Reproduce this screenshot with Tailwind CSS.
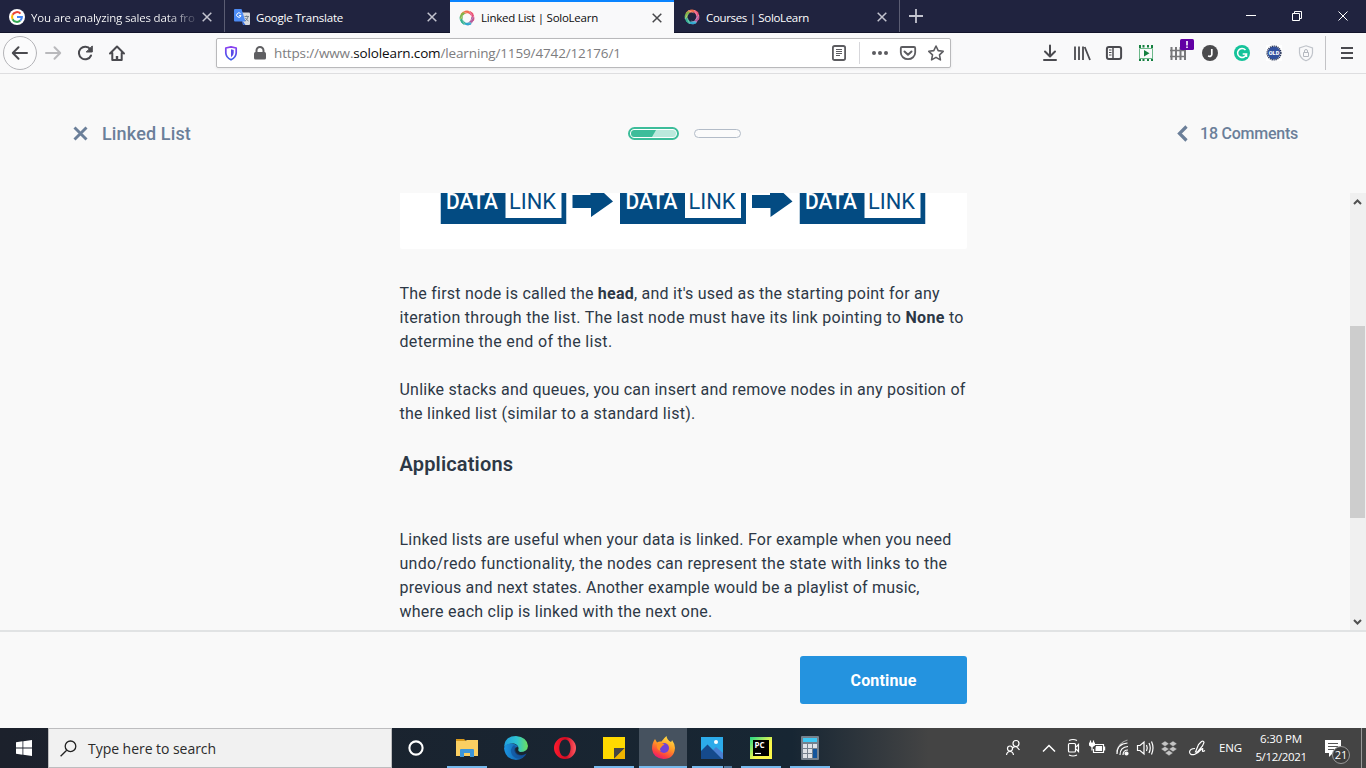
<!DOCTYPE html>
<html lang="en">
<head>
<meta charset="utf-8">
<title>Linked List | SoloLearn</title>
<script src="https://cdn.jsdelivr.net/npm/@tailwindcss/browser@4"></script>
</head>
<body class="w-[1366px] h-[768px] overflow-hidden bg-[#f9f9fa] flex flex-col font-['Open_Sans',sans-serif]">
<svg class="hidden">
  <defs>
    <symbol id="solo" viewBox="0 0 16 16"><g fill="none" stroke-width="2.6" stroke-linecap="round"><path d="M3 4.200A6 6 0 0 1 7 2" stroke="#f0883e"/><path d="M6 2.200Q10 1 13 4" stroke="#f26b4e"/><path d="M11.500 3Q15 6 13.800 10" stroke="#e8507e"/><path d="M13.500 8Q13 12.500 9 14" stroke="#b05a9c"/><path d="M11 13.500Q6 15 3.500 12" stroke="#2fa8cf"/><path d="M5 13.200Q1 10 2.200 6.500" stroke="#35b08e"/><path d="M2.200 8Q2 5 4.500 3.500" stroke="#82b54b"/></g><g stroke="#ffffff" stroke-opacity=".55" stroke-width=".6" fill="none"><path d="M4 1.500Q8 3 9.500 4M10 1Q13 4 12.500 7M15 6Q13 9 11.500 11M13 13Q9 13 7 12M6 15Q4 12 3.500 9M1 10Q3 6 4.500 5"/></g></symbol>
    <symbol id="x" viewBox="0 0 10 10"><path d="M.7.7 9.300 9.300M9.300.7.7 9.300" fill="none" stroke="currentColor" stroke-width="1.500"/></symbol>
  </defs>
</svg>

<!-- Tab strip -->
<div class="h-[33px] shrink-0 bg-[#20233f] flex text-white text-[11.5px] border-b border-[#12142b]">
  <div class="w-[225px] h-[32px] border-r border-[#5b5d73] flex items-center pl-[9px] pt-[2px]">
    <svg class="size-4 shrink-0" viewBox="0 0 16 16"><circle cx="8" cy="8" r="8" fill="#fff"/><g fill="none" stroke-width="2"><path d="M11.500 4.600A4.900 4.900 0 0 0 3.600 5.800" stroke="#ea4335"/><path d="M3.600 5.800A4.900 4.900 0 0 0 3.600 10.200" stroke="#fbbc05"/><path d="M3.600 10.200A4.900 4.900 0 0 0 11.300 11.600" stroke="#34a853"/><path d="M8 8H12.900A4.900 4.900 0 0 1 11.300 11.600" stroke="#4285f4"/></g></svg>
    <div class="ml-[6px] w-[165px] pt-px whitespace-nowrap tracking-[-0.17px] bg-linear-to-r from-white from-82% to-white/15 bg-clip-text text-transparent">You are analyzing sales data fro</div>
    <svg class="size-[10px] ml-[6px] text-[#c3c4cf]"><use href="#x"/></svg>
  </div>
  <div class="w-[225px] flex items-center pl-[9px] pt-[2px]">
    <svg class="size-4 shrink-0" viewBox="0 0 16 16"><path d="M7 3.500H15Q16 3.500 16 4.500V15Q16 16 15 16H9Z" fill="#d8d9dc"/><path d="M9 12.500 11.500 16H9.300L8 12.500Z" fill="#3367d6"/><path d="M1 0H7.500L11.500 12.500H1Q0 12.500 0 11.500V1Q0 0 1 0Z" fill="#4c8bf5"/><path d="M6.600 4.700A2.200 2.200 0 1 0 7 6.600H5" fill="none" stroke="#fff" stroke-width="1"/><path d="M10.500 7.500H15M12.700 6.500V7.500M14 8Q13 11 11 12M11.500 9Q12.500 11 14.500 12" fill="none" stroke="#6b7b86" stroke-width=".9"/></svg>
    <div class="ml-[6px] w-[165px] pt-px whitespace-nowrap tracking-[-0.22px]">Google Translate</div>
    <svg class="size-[10px] ml-[6px] text-[#c3c4cf]"><use href="#x"/></svg>
  </div>
  <div class="w-[224px] h-[33px] bg-[#f9f9fa] border-t-2 border-[#0a84ff] text-[#0c0c0d] flex items-center pl-[9px]">
    <svg class="size-4 shrink-0"><use href="#solo"/></svg>
    <div class="ml-[6px] w-[165px] pt-px whitespace-nowrap tracking-[-0.26px]">Linked List | SoloLearn</div>
    <svg class="size-[10px] ml-[6px] text-[#48484b]"><use href="#x"/></svg>
  </div>
  <div class="w-[226px] h-[32px] border-r border-[#5b5d73] flex items-center pl-[10px] pt-[2px]">
    <svg class="size-4 shrink-0"><use href="#solo"/></svg>
    <div class="ml-[6px] w-[165px] pt-px whitespace-nowrap tracking-[-0.33px]">Courses | SoloLearn</div>
    <svg class="size-[10px] ml-[6px] text-[#c3c4cf]"><use href="#x"/></svg>
  </div>
  <svg class="w-[32px] h-8 shrink-0" viewBox="0 0 32 32"><path d="M9 16H23M16 9V23" stroke="#c3c4cf" stroke-width="1.800"/></svg>
  <svg class="ml-auto w-[138px] h-8" viewBox="0 0 138 32" fill="none" stroke="#fff" stroke-width="1"><path d="M18 15.500H28M64.500 13.500H71.500V20.500H64.500ZM66.500 13V11.500H73.500V18.500H72M110.500 11.500 119.500 20.500M119.500 11.500 110.500 20.500"/></svg>
</div>

<!-- Toolbar -->
<div class="h-[41px] shrink-0 bg-[#f9f9fa] border-b border-[#dedee0] flex items-center">
  <svg class="w-[216px] h-10 shrink-0" viewBox="0 33 216 40" fill="none" stroke="#4a4a4f" stroke-width="2" stroke-linecap="round" stroke-linejoin="round">
    <circle cx="20" cy="53" r="16.500" fill="#fbfbfc" stroke="#b4b4b8" stroke-width="1"/>
    <path d="M13 53H27M18.500 47.300 12.800 53 18.500 58.700"/>
    <path d="M46 53H60M54.500 47.300 60.200 53 54.500 58.700" stroke="#b9b9bc"/>
    <path d="M90.300 49.300A6.300 6.300 0 1 0 91 55.500"/><path d="M92.300 46.300V52H86.600Z" fill="#4a4a4f" stroke-width="1"/>
    <path d="M110 53.500 117 46.500 124 53.500M112.300 53V60H121.700V53"/><path d="M117 60V56" stroke-width="2.400" stroke-linecap="butt"/>
  </svg>
  <div class="w-[735px] h-[30px] bg-white border border-[#b9b9bb] rounded-[2px] flex items-center shadow-[0_1px_3px_rgba(0,0,0,0.07)] shrink-0">
    <svg class="w-[57px] h-7 shrink-0" viewBox="217 39 57 28">
      <defs><linearGradient id="sh" x1="0" x2="0" y1="0" y2="1"><stop stop-color="#8a3ff0"/><stop offset="1" stop-color="#3a5ce8"/></linearGradient></defs>
      <path d="M231 46.800 236.200 48V53Q236 57.500 231 59.800Q226 57.500 225.800 53V48Z" fill="none" stroke="url(#sh)" stroke-width="1.700" stroke-linejoin="round"/><path d="M231 49.300V57.300Q233.700 55.500 233.700 53V50Z" fill="#5a4be8"/>
      <path d="M255.500 52H264.500Q266 52 266 53.500V58Q266 59.500 264.500 59.500H255.500Q254 59.500 254 58V53.500Q254 52 255.500 52Z" fill="#5f5f62"/><path d="M256.500 53V50.500A3.500 3.500 0 0 1 263.500 50.500V53" stroke="#5f5f62" stroke-width="2" fill="none"/>
    </svg>
    <div class="flex-1 pt-px whitespace-nowrap text-[13.5px] tracking-[-0.14px] text-[#7d7d80]">https://www.<span class="text-[#0c0c0d]">sololearn.com</span>/learning/1159/4742/12176/1</div>
    <svg class="w-[126px] h-7 shrink-0" viewBox="824 39 126 28" fill="none" stroke="#5c5c60" stroke-width="1.800" stroke-linejoin="round">
      <rect x="832.900" y="46" width="12.200" height="14" rx="1.800"/><path d="M836 49.500H842M836 51.500H842M836 53.500H842M836 55.500H840" stroke-width="1"/>
      <path d="M859.500 42V64" stroke="#d7d7db" stroke-width="1"/>
      <g fill="#5c5c60" stroke="none"><circle cx="874" cy="53" r="2"/><circle cx="880" cy="53" r="2"/><circle cx="886" cy="53" r="2"/></g>
      <path d="M902 47H914Q915.200 47 915.200 48.200V52.500A7.200 6.700 0 0 1 900.800 52.500V48.200Q900.800 47 902 47Z"/><path d="M904.500 51.500 908 54.800 911.500 51.500" stroke-width="2" stroke-linecap="round"/>
      <path d="M936 46 938.200 50.600 943.200 51.300 939.500 54.800 940.400 59.900 936 57.400 931.600 59.900 932.500 54.800 928.800 51.300 933.800 50.600Z" stroke-width="1.600"/>
    </svg>
  </div>
  <svg class="w-[415px] h-10 shrink-0" viewBox="951 33 415 40" fill="none" stroke="#4a4a4f" stroke-width="2">
    <path d="M1050 45.500V56M1045 51.500 1050 56.500 1055 51.500M1044 60H1056" stroke-linecap="round" stroke-linejoin="round"/>
    <path d="M1075 46.500V60M1079 46.500V60M1083 46.500V60M1084.700 47 1090 60" stroke-width="1.800"/>
    <rect x="1106.900" y="46.900" width="14.200" height="12.200" rx="2"/><path d="M1113 47V59" stroke-width="1.500"/><path d="M1109 50H1111.500M1109 52.500H1111.500M1109 55H1111.500" stroke-width="1"/>
    <g fill="#14803f" stroke="none"><path d="M1139 45H1141V48H1139ZM1142.500 45H1144.500V47.500H1142.500ZM1147 45H1149V47.500H1147ZM1151 45H1153V48H1151ZM1139 58.500H1141V61H1139ZM1142.500 59H1144.500V61H1142.500ZM1147 59H1149V61H1147ZM1151 58.500H1153V61H1151Z"/><path d="M1144 50V56.500L1149.500 53.250Z"/></g>
    <path d="M1139.500 48.500H1152.500V58.500H1139.500Z" stroke="#6db88a" stroke-width="1"/>
    <g stroke="#77777a"><path d="M1157.300 0" /><path d="M1172.500 47V60M1177 47V60M1181.500 47V60M1186 47V60" transform="translate(-1 0)" stroke-width="2"/><path d="M1170 50.500H1186M1170 56.500H1186" stroke-width="1.300"/></g>
    <rect x="1180" y="39" width="14" height="11" rx="1.500" fill="#6200a4" stroke="none"/><path d="M1187 41V45.500M1187 46.500V48" stroke="#fff" stroke-width="1.600"/>
    <circle cx="1210" cy="53" r="8" fill="#4b4b4d" stroke="none"/><path d="M1211.800 49V54.500Q1211.500 57 1208 56" stroke="#fff" stroke-width="1.700"/>
    <circle cx="1242" cy="53" r="8" fill="#15c39a" stroke="none"/><path d="M1245.500 50A4.500 4.500 0 1 0 1246.500 54H1242.700M1246.500 54V57" stroke="#fff" stroke-width="1.500"/>
    <rect x="1266" y="45" width="16" height="16" fill="#fff" stroke="none"/><circle cx="1274" cy="53" r="6.500" fill="#31509e" stroke="none"/><circle cx="1274" cy="53" r="6.900" stroke="#253152" stroke-width="1.400" stroke-dasharray="1.200 .8"/>
    <text x="1274" y="55.200" text-anchor="middle" textLength="10.500" lengthAdjust="spacingAndGlyphs" font-family="Roboto" font-weight="900" font-size="6" fill="#fff" stroke="none">OLD</text>
    <path d="M1306 45.800 1312.500 48V53Q1312 58.500 1306 60.800Q1300 58.500 1299.500 53V48Z" stroke="#c0c4ca" stroke-width="1.200"/><path d="M1303.500 52.500H1308.500V56.500H1303.500ZM1304.500 52V51A1.500 1.500 0 0 1 1307.500 51V52" stroke="#b4b8bf" stroke-width="1"/>
    <path d="M1325.500 36V70" stroke="#c3c3c6" stroke-width="1"/>
    <path d="M1341 48H1353M1341 53H1353M1341 58H1353"/>
  </svg>
</div>

<!-- Lesson page -->
<main class="flex-1 min-h-0 flex flex-col bg-[#f9f9f9] font-[Roboto,sans-serif] text-[#2d3846]">
  <header class="h-[119px] shrink-0 flex items-center justify-between pl-[73px] pr-[68px] text-[#6b7f99] font-medium">
    <div class="w-[338px] flex items-center text-[18px]">
      <svg class="size-[15px] mr-[14px]" viewBox="0 0 15 15"><path d="M1.500 1.500 13.500 13.500M13.500 1.500 1.500 13.500" stroke="currentColor" stroke-width="2.900"/></svg>
      <span class="tracking-[0.15px]">Linked List</span>
    </div>
    <div class="flex items-center gap-[15px]">
      <div class="w-[51px] h-[13px] rounded-full border-2 border-[#3dbd9a] bg-white p-px"><div class="h-full rounded-full overflow-hidden bg-[#bbe9dc]"><div class="h-full w-[25px] bg-[#3dbd9a] [clip-path:polygon(0_0,100%_0,84%_100%,0_100%)]"></div></div></div>
      <div class="w-[47px] h-[9px] rounded-full border border-[#b3bcc8] bg-[#fbfbfb]"></div>
    </div>
    <div class="w-[340px] flex items-center justify-end text-[16px]">
      <svg class="w-[11px] h-[17px] mr-[12px]" viewBox="0 0 11 17"><path d="M9.500 1.500 2.500 8.500 9.500 15.500" fill="none" stroke="currentColor" stroke-width="3.200"/></svg>
      <span class="tracking-[-0.24px]">18 Comments</span>
    </div>
  </header>

  <section class="h-[437px] shrink-0 flex overflow-hidden">
    <article class="w-[567px] ml-[400px] text-[16px] leading-6 whitespace-nowrap">
      <svg class="block w-[567px] h-[56px]" viewBox="400 193 567 56">
        <defs>
          <symbol id="node" viewBox="0 0 126 31"><path d="M0 0H126V31H0Z" fill="#034b82"/><path d="M65 0H121V25H65Z" fill="#fff"/><g font-family="Roboto" font-weight="500" font-size="21.500"><text x="5.500" y="16" textLength="52" lengthAdjust="spacingAndGlyphs" fill="#fff">DATA</text><text x="68.500" y="16" textLength="47" lengthAdjust="spacingAndGlyphs" fill="#034b82" font-weight="400">LINK</text></g></symbol>
          <symbol id="arrow" viewBox="0 0 41 24"><path d="M0 2H19V0H28.500L37 8.500 19 24V15.500H0Z" fill="#034b82"/></symbol>
        </defs>
        <path d="M400 193H967V247Q967 249 965 249H402Q400 249 400 247Z" fill="#fff"/>
        <use href="#node" x="440.500" y="193" width="126" height="31"/><use href="#node" x="620" y="193" width="126" height="31"/><use href="#node" x="799.500" y="193" width="126" height="31"/>
        <path id="a" d="M573 195H591V193H604.500L613.500 201.500 591.500 217V208H573Z" transform="translate(-.5 0)" fill="#034b82"/><use href="#a" x="179.500"/>
      </svg>
      <p class="mt-[33px] -ml-[0.5px]">
        <span class="tracking-[0.235px]">The first node is called the <b>head</b>, and it's used as the starting point for any</span><br>
        <span class="tracking-[0.285px]">iteration through the list. The last node must have its link pointing to <b>None</b> to</span><br>
        <span class="tracking-[0.32px]">determine the end of the list.</span>
      </p>
      <p class="mt-6 -ml-[0.5px]">
        <span class="tracking-[0.23px]">Unlike stacks and queues, you can insert and remove nodes in any position of</span><br>
        <span class="tracking-[0.26px]">the linked list (similar to a standard list).</span>
      </p>
      <h2 class="mt-[26px] text-[20px] font-semibold tracking-[0.15px] -ml-[0.5px]">Applications</h2>
      <p class="mt-[52px] -ml-[0.5px]">
        <span class="tracking-[0.22px]">Linked lists are useful when your data is linked. For example when you need</span><br>
        <span class="tracking-[0.29px]">undo/redo functionality, the nodes can represent the state with links to the</span><br>
        <span class="tracking-[0.185px]">previous and next states. Another example would be a playlist of music,</span><br>
        <span class="tracking-[0.245px]">where each clip is linked with the next one.</span>
      </p>
    </article>
    <div class="ml-auto w-4 h-full bg-[#f0f0f0] flex flex-col items-center">
      <svg class="w-4 h-[133px]" viewBox="0 0 16 133"><path d="M4 11 7.500 7.500 11 11" fill="none" stroke="#505050" stroke-width="2"/></svg>
      <div class="w-[15px] h-[192px] bg-[#cdcdcd] -ml-px"></div>
      <svg class="w-4 h-[112px]" viewBox="0 0 16 112"><path d="M4 102 7.500 105.500 11 102" fill="none" stroke="#505050" stroke-width="2"/></svg>
    </div>
  </section>

  <footer class="flex-1 border-t-2 border-[#e1e3e4] flex">
    <button class="ml-[800px] mt-[24px] w-[167px] h-[48px] pt-px rounded-[3px] bg-[#2493df] text-white text-[16px] font-bold tracking-[0.16px]">Continue</button>
  </footer>
</main>

<!-- Taskbar -->
<div class="h-10 shrink-0 flex text-white bg-linear-to-r from-[#1c212c] from-0% via-[#172633] via-58% to-[#444444] to-68%">
  <div class="w-12 flex items-center justify-center"><svg class="size-4" viewBox="0 0 16 16" fill="#fff"><path d="M0 2.300 6.500 1.300V7.500H0ZM7.300 1.200 16 0V7.500H7.300ZM0 8.500H6.500V14.700L0 13.700ZM7.300 8.500H16V16L7.300 14.800Z"/></svg></div>
  <div class="w-[344px] h-10 bg-[#f1f1f1] border border-[#bdbdbf] flex items-center text-[#2b2b2b]">
    <svg class="size-[17px] ml-[11px]" viewBox="0 0 17 17" fill="none" stroke="#222" stroke-width="1.300"><circle cx="10.500" cy="6.300" r="5.300"/><path d="M6.700 10.200.6 16.300"/></svg>
    <span class="ml-[11px] text-[14px] tracking-[-0.04px] whitespace-nowrap">Type here to search</span>
  </div>
  <div class="w-[51px] flex items-center pl-[16px]"><svg class="size-4" viewBox="0 0 16 16"><circle cx="8" cy="8" r="6.600" fill="none" stroke="#fff" stroke-width="2.100"/></svg></div>
  <div class="flex gap-px">
    <div class="w-12 flex flex-col items-center pt-[9px] justify-between"><svg class="w-[22px] h-[22px]" viewBox="0 0 22 22"><path d="M0 2H8L10 4H0Z" fill="#d99a1c"/><path d="M0 4H9L11 3H22V19H0Z" fill="#fbcf62"/><path d="M4 13Q4 12 5 12H17Q18 12 18 13V20H14V16H8V20H4Z" fill="#3d96d9"/></svg><div class="w-10 h-[2px] bg-[#76b9ed]"></div></div>
    <div class="w-12 flex justify-center pt-[8px]"><svg class="size-6" viewBox="0 0 24 24"><defs><linearGradient id="ea" x1="0" x2="1"><stop stop-color="#209fe0"/><stop offset=".55" stop-color="#2fc4d0"/><stop offset="1" stop-color="#6ee05a"/></linearGradient><linearGradient id="eb" x1="0" x2="1"><stop stop-color="#1b96e3"/><stop offset="1" stop-color="#114c95"/></linearGradient></defs><path d="M0 11Q1 0 12 0Q23 1 24 10Q23.500 16 16 16Q13.500 15 14.500 13Q15 9 10 7.500Q4 7 0 11Z" fill="url(#ea)"/><path d="M0 12Q2 7 8 7.500Q13 8 14 11Q10 11 10.500 15Q12 20 18 19.500Q20.500 19 22.500 17.500Q19 24 12 24Q1 23 0 12Z" fill="url(#eb)"/><path d="M10 9Q5 13 8 19Q11 23 16 22.500Q22 20 22.500 17.500Q18 20 14 18Q10 15 12 11Z" fill="#124b93" opacity=".6"/></svg></div>
    <div class="w-12 flex justify-center pt-[9px]"><svg class="w-[22px] h-[22px]" viewBox="0 0 22 22"><defs><linearGradient id="op" x1="0" x2="1"><stop stop-color="#ff1b2d"/><stop offset=".55" stop-color="#d00a22"/><stop offset="1" stop-color="#ff5a62"/></linearGradient></defs><path d="M11 0A11 11 0 1 1 11 22A11 11 0 1 1 11 0ZM11 2.500C3.500 2.500 3.500 19.500 11 19.500C18.500 19.500 18.500 2.500 11 2.500Z" fill-rule="evenodd" fill="url(#op)"/></svg></div>
    <div class="w-12 flex flex-col items-center pt-[9px] justify-between"><svg class="w-[22px] h-[22px]" viewBox="0 0 22 22"><path d="M0 0H22V22H0Z" fill="#ffd900"/><path d="M11 11H22L11 22Z" fill="#454545"/><path d="M22 11V22H11Z" fill="#f0b400"/></svg><div class="w-10 h-[2px] bg-[#76b9ed]"></div></div>
    <div class="w-12 flex flex-col items-center pt-[8px] justify-between bg-[#46525f]"><svg class="w-[23px] h-[23px]" viewBox="0 0 23 23"><defs><linearGradient id="ff" x1=".8" y1="0" x2=".3" y2="1"><stop stop-color="#ffe84a"/><stop offset=".45" stop-color="#ff9a25"/><stop offset=".8" stop-color="#fb4140"/><stop offset="1" stop-color="#e8147a"/></linearGradient></defs><path d="M3 3 5 6.500Q7 5 9.500 5.500Q12 2 14.500 0Q15 4 19 6Q20 5 20 4Q23 8 23 12Q22 23 11.500 23Q1 22 0 13Q0 7 3 3Z" fill="url(#ff)"/><circle cx="12" cy="12" r="5" fill="#7143d6"/><path d="M5 8Q9 6 12.500 8.500Q10 9.500 9 11.500Q7 13 9 15Q4 14 5 8Z" fill="#ff9122"/></svg><div class="w-12 h-[2px] bg-[#76b9ed]"></div></div>
    <div class="w-12 flex flex-col items-center pt-[9px] justify-between"><svg class="w-[22px] h-[22px]" viewBox="0 0 22 22"><path d="M0 0H22V22H0Z" fill="#2cabea"/><path d="M11 14 15 10 22 16V22H11Z" fill="#4a7fd0"/><path d="M0 14 6.500 7.500 21 22H0Z" fill="#154a8c"/><circle cx="15" cy="5" r="2" fill="#fff"/></svg><div class="w-10 h-[2px] flex gap-px"><div class="w-[31px] bg-[#76b9ed]"></div><div class="w-2 bg-[#527ba0]"></div></div></div>
    <div class="w-12 flex flex-col items-center pt-[9px] justify-between"><svg class="w-[22px] h-[22px]" viewBox="0 0 22 22"><defs><linearGradient id="pc" x1="0" y1="0" x2=".6" y2=".6"><stop stop-color="#21d789"/><stop offset="1" stop-color="#fcf84a"/></linearGradient></defs><path d="M0 0H22V22H0Z" fill="url(#pc)"/><path d="M3 3H19V19H3Z" fill="#000"/><text x="4.500" y="11" font-family="Open Sans" font-weight="700" font-size="8" fill="#fff">PC</text><path d="M5 16.500H11" stroke="#fff" stroke-width="1.200"/></svg><div class="w-10 h-[2px] bg-[#76b9ed]"></div></div>
    <div class="w-12 flex flex-col items-center pt-[8px] justify-between"><svg class="w-[18px] h-6" viewBox="0 0 18 24"><rect width="18" height="24" rx="1" fill="#75818d"/><path d="M2 2H16V6H2Z" fill="#3fc8f4"/><path d="M2 8H6V12H2ZM7 8H11V12H7ZM12 8H16V12H12ZM2 13H6V17H2ZM7 13H11V17H7ZM2 18H6V22H2ZM7 18H11V22H7Z" fill="#dfe3e8"/><path d="M12 13H16V22H12Z" fill="#13559c"/></svg><div class="w-10 h-[2px] bg-[#76b9ed]"></div></div>
  </div>
  <svg class="ml-auto w-[218px] h-10 shrink-0" viewBox="1000 728 218 40" fill="none" stroke="#fff" stroke-width="1.200">
    <circle cx="1016" cy="743.500" r="3"/><path d="M1012.500 748Q1016 744.500 1019.500 750"/><circle cx="1010" cy="748.500" r="2.500"/><path d="M1006.500 755Q1007 751.500 1010 751.500Q1013 751.500 1013.500 755"/>
    <path d="M1043 751.500 1049 745.500 1055 751.500" stroke-width="1.500"/>
    <rect x="1068.500" y="743.500" width="7" height="8.500" rx="1"/><path d="M1076 747 1078.500 744.500V751.500L1076 749M1069 740.500Q1073 738.500 1077 740.500M1069 755Q1073 757 1077 755"/>
    <path d="M1094.500 744.500H1103.500V752.500H1093.500V749M1104.600 746.500V750.500M1090.500 740.500V743M1093.500 740.500V743"/><path d="M1096 746H1102V751H1095.500V748ZM1089 742.500H1095V745.500L1092 747.500 1089 745.500Z" fill="#fff" stroke="none"/><path d="M1092 746.500V750.500"/>
    <path d="M1117 754Q1117 744 1127.500 743M1120 755Q1120 747 1128 746.500M1123 755Q1123 750 1128 750"/><path d="M1116.500 751.500Q1119 742.500 1127.500 740" opacity=".5"/><circle cx="1126.500" cy="753.500" r="1.500" fill="#fff"/>
    <path d="M1137.500 745.500H1140L1144 742V754L1140 750.500H1137.500ZM1146.500 745Q1148 748 1146.500 751M1149 743Q1151.500 748 1149 753M1151.500 741.500Q1154.500 748 1151.500 754.500"/>
    <path d="M1165 741 1169 743.700 1165 746.400 1161 743.700ZM1173 741 1177 743.700 1173 746.400 1169 743.700ZM1165 746.400 1169 749.100 1165 751.800 1161 749.100ZM1173 746.400 1177 749.100 1173 751.800 1169 749.100ZM1169 750.300 1173 753 1169 755.700 1165 753Z" fill="#c4c4c4" stroke="#444" stroke-width=".4"/>
    <path d="M1195.500 752 1198.500 744.500 1201.500 741.500Q1203.500 740.500 1204 742.500L1202.500 746 1197.500 752ZM1195 748.500Q1190 748.500 1189.500 752Q1190 755.500 1194.500 754.500Q1198 753 1201 749.500Q1203.500 747.500 1202.500 750Q1202 752.500 1205 750.500"/>
  </svg>
  <div class="w-[25px] pl-px flex items-center text-[11.5px] tracking-[-0.1px] shrink-0">ENG</div>
  <div class="w-[76px] flex flex-col justify-center text-center text-[11.5px] leading-[18px] shrink-0"><div class="tracking-[-0.14px]">6:30 PM</div><div class="tracking-[-0.36px]">5/12/2021</div></div>
  <svg class="w-[47px] h-10 shrink-0" viewBox="1319 728 47 40"><path d="M1325 740H1341V753H1333L1329 757V753H1325Z" fill="#fff"/><path d="M1328 743.500H1338M1328 746.500H1338M1328 749.500H1334" stroke="#555"/><circle cx="1341" cy="755" r="8.500" fill="#3c3c3c" stroke="#999"/><text x="1341" y="759" text-anchor="middle" font-family="Open Sans" font-size="11" fill="#fff">21</text><path d="M1361.500 728V768" stroke="#999"/></svg>
</div>
</body>
</html>
